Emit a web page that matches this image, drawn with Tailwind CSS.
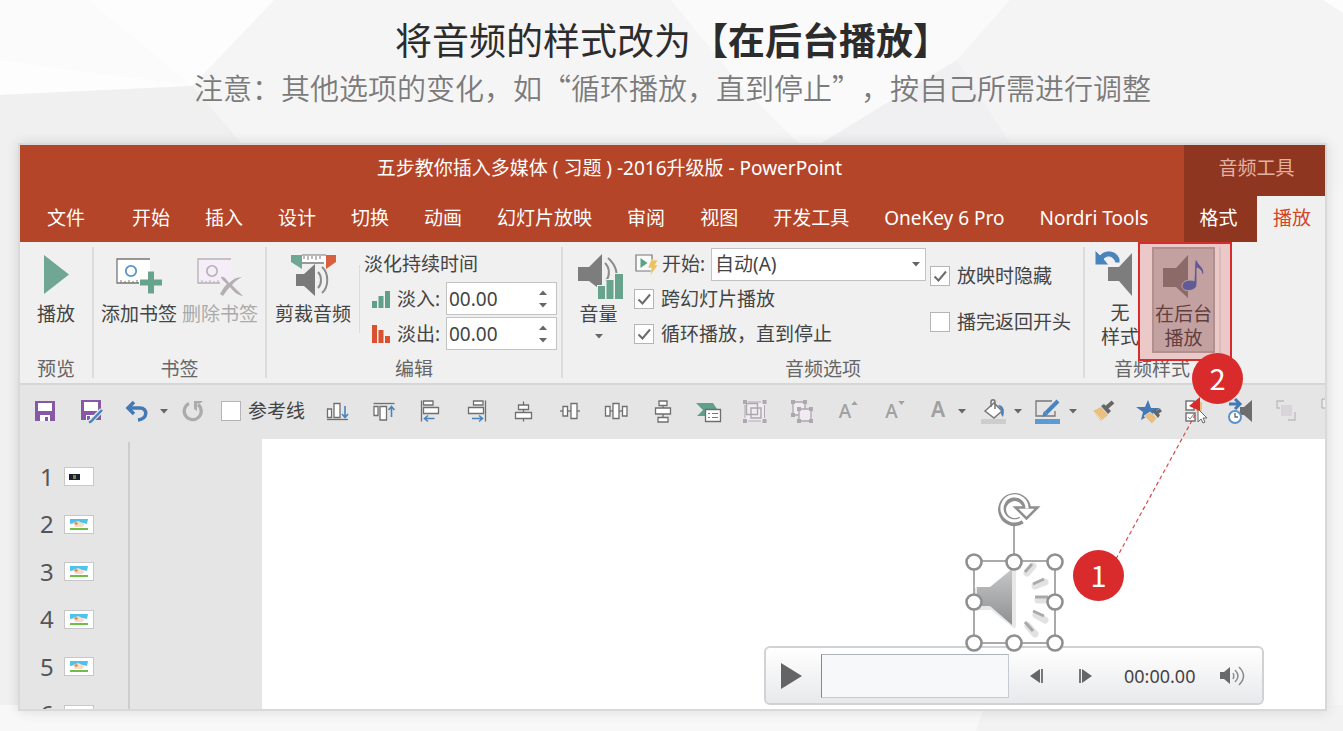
<!DOCTYPE html>
<html lang="zh-CN">
<head>
<meta charset="utf-8">
<meta name="viewport" content="width=device-width, initial-scale=1">
<title>将音频的样式改为【在后台播放】</title>
<script src="https://cdn.jsdelivr.net/npm/@tailwindcss/browser@4"></script>
</head>
<body class="bg-[#f5f5f6] font-['Noto_Sans','Noto_Sans_CJK_SC',sans-serif] text-[19px] leading-6 text-[#444]">
<!-- shared symbols -->
<svg class="hidden" aria-hidden="true">
  <symbol id="caret" viewBox="0 0 8 5"><path d="M0 0h8L4 4.5z" fill="#666"/></symbol>
  <symbol id="tick" viewBox="0 0 20 20"><path d="M4.500 10.500l4 4L16 5.500" fill="none" stroke="#6c6c6c" stroke-width="2"/></symbol>
  <symbol id="scene" viewBox="0 0 18 11"><path d="M0 0h18l-1 5-4-1-4 1-4-1-5 1z" fill="#4cc3ee"/><path d="M3 4l5-2 7 3-3 3-7 0z" fill="#f6dcc4"/><path d="M4 4l3-1 1 2-2 1z" fill="#d98a5b"/><path d="M0 9h18v2H0z" fill="#6cc04a"/></symbol>
</svg>

<div class="relative isolate flex h-screen min-h-[600px] flex-col overflow-hidden pr-4 pb-5 pl-[18px]">
  <svg class="absolute inset-0 -z-10 h-full w-full" viewBox="0 0 1343 731" preserveAspectRatio="none" aria-hidden="true">
    <rect width="1343" height="731" fill="#f5f5f6"/>
    <path d="M0 0H274L192 86 0 95z" fill="#fdfdfd"/>
    <path d="M0 0H88L192 86 0 60z" fill="#fbfbfb"/>
    <path d="M0 95L192 86 278 185V731H0z" fill="#f0f0f1"/>
    <path d="M671 0H1010L957 60 807 152 740 85z" fill="#fafafb"/>
    <path d="M957 60L807 152V185H1037z" fill="#f0f0f2"/>
    <path d="M1010 0L957 60 1037 185H1343V0z" fill="#f4f4f5"/>
    <path d="M1323 0L1343 13V0z" fill="#fdfdfd"/>
    <path d="M0 705H985L976 731H0z" fill="#f8f8f9"/>
    <path d="M985 705H1343V731H976z" fill="#f2f2f3"/>
  </svg>

  <header class="pt-[14px] text-center font-['Noto_Sans_CJK_SC',sans-serif] [text-spacing-trim:space-all]">
    <h1 class="text-[37px] leading-[50px] whitespace-nowrap text-[#2c2c2c]">将音频的样式改为<strong class="font-bold">【在后台播放】</strong></h1>
    <p class="text-[29px] leading-[46px] font-[350] whitespace-nowrap text-[#7b7b7b]">注意：其他选项的变化，如“循环播放，直到停止”，按自己所需进行调整</p>
  </header>

  <main class="relative mt-[33px] flex min-h-0 flex-1 flex-col border-2 border-[#d9d9d9] bg-[#e5e5e5] shadow-[0_0_12px_rgba(0,0,0,0.12)]">
    <!-- title bar and tabs -->
    <div class="flex h-[97px] flex-none bg-[#b54529] text-white">
      <div class="flex min-w-0 flex-1 flex-col overflow-hidden">
        <div class="flex h-[50px] items-center justify-center pb-1 pl-[15px] whitespace-nowrap"><span>五步教你插入多媒体 ( 习题 ) -2016升级版 - PowerPoint</span></div>
        <nav class="flex h-[47px] items-center gap-[35px] pb-[2px] pl-[27px] whitespace-nowrap">
          <button class="mr-[12px]">文件</button>
          <button>开始</button><button>插入</button><button>设计</button><button>切换</button><button>动画</button><button>幻灯片放映</button><button>审阅</button><button>视图</button><button>开发工具</button><button>OneKey 6 Pro</button><button>Nordri Tools</button>
        </nav>
      </div>
      <div class="flex w-[141px] flex-none flex-col bg-[#8f3620]">
        <div class="flex h-[51px] items-center justify-center pb-[5px] pl-1 text-[#e3b1a2]"><span>音频工具</span></div>
        <div class="flex flex-1">
          <button class="w-[73px] pr-1 pb-[2px]">格式</button>
          <button class="flex-1 bg-[#f0f0f0] pb-[2px] pl-[2px] text-[#d24726]">播放</button>
        </div>
      </div>
    </div>

    <!-- ribbon -->
    <div class="flex h-[143px] flex-none border-b-2 border-[#d6d6d6] bg-[#f0f0f0] py-[5px] whitespace-nowrap">
      <section class="flex w-[74px] flex-none flex-col items-center justify-between border-r-2 border-[#dcdcdc]">
        <button class="flex flex-col items-center">
          <svg class="h-[55px] w-10" viewBox="0 0 40 55"><path d="M8 8L33 27.500 8 47z" fill="#70a794"/></svg>
          <span>播放</span>
        </button>
        <h2 class="leading-[18px] text-[#666]">预览</h2>
      </section>

      <section class="flex w-[173px] flex-none flex-col items-center justify-between border-r-2 border-[#dcdcdc]">
        <div class="flex gap-[5px]">
          <button class="flex flex-col items-center">
            <svg class="h-[55px] w-[52px]" viewBox="0 0 52 55"><path d="M4 12h33v24H4z" fill="#fff"/><path d="M37 12H4v24h22" fill="none" stroke="#777" stroke-width="1.300"/><path d="M8 33v3M12 34v2M16 33v3M20 34v2M24 33v3" stroke="#777"/><circle cx="18" cy="24" r="5.200" fill="none" stroke="#5b93c9" stroke-width="1.800"/><path d="M35 24.500h6v8h8v6h-8v8h-6v-8h-8v-6h8z" fill="#68a38e"/></svg>
            <span>添加书签</span>
          </button>
          <button class="flex flex-col items-center text-[#aaa]" disabled>
            <svg class="h-[55px] w-[52px]" viewBox="0 0 52 55"><path d="M4 12h33v24H4z" fill="#f5eef8"/><path d="M37 12H4v24h22" fill="none" stroke="#b5b0b5" stroke-width="1.300"/><path d="M8 33v3M12 34v2M16 33v3M20 34v2M24 33v3" stroke="#b5b0b5"/><circle cx="18" cy="24" r="5.200" fill="none" stroke="#b3b0b3" stroke-width="1.600"/><path d="M27 30c3-1 5 2 8 6 4-4 8-6 13-6-5 3-8 5-10 8 3 3 7 7 11 11-6-1-10-5-13-9-3 3-5 6-7 9l-3-2c2-4 4-7 7-10-3-3-6-5-6-7z" fill="#b3afb3"/></svg>
            <span>删除书签</span>
          </button>
        </div>
        <h2 class="leading-[18px] text-[#666]">书签</h2>
      </section>

      <section class="flex w-[296px] flex-none flex-col justify-between border-r-2 border-[#dcdcdc]">
        <div class="flex">
          <button class="flex w-[92px] flex-col items-center self-start">
            <svg class="h-[55px] w-[50px]" viewBox="0 0 50 55"><path d="M14 8h24v9H14z" fill="#fff"/><path d="M16 9v3M20 9v4M24 9v3M28 9v4M32 9v3" stroke="#777"/><path d="M14 8h24" stroke="#777"/><path d="M14 16h22" stroke="#777" stroke-width="1.500"/><path d="M3 8h11v14L3 15z" fill="#70a794"/><path d="M48 8H38v14l10-7z" fill="#d9603f"/><path d="M8 27h8l11-10v32L16 39H8z" fill="#7a7a7a"/><path d="M30 25c4 4 4 12 0 16M34 20c7 6 7 20 0 26" fill="none" stroke="#8b8b8b" stroke-width="2"/></svg>
            <span>剪裁音频</span>
          </button>
          <div class="mt-[18px] h-[68px] w-px bg-[#dcdcdc]"></div>
          <div class="flex flex-1 flex-col pl-1">
            <div class="flex h-[34px] items-center">淡化持续时间</div>
            <div class="flex h-[35px] items-center">
              <svg class="ml-2 h-[18px] w-[18px]" viewBox="0 0 18 18"><path d="M0 11h5v7H0zM6.500 6h5v12h-5zM13 1h5v17h-5z" fill="#5fa188"/></svg>
              <label for="fin" class="ml-[7px] w-12">淡入:</label>
              <span class="ml-px flex h-[33px] w-[111px] border border-[#c3c3c3] bg-white"><input id="fin" class="w-20 bg-transparent pl-[2px] outline-none" value="00.00"><span class="flex flex-1 flex-col justify-center gap-2 pl-3"><button aria-label="增加淡入"><svg class="h-[5px] w-2 rotate-180"><use href="#caret"/></svg></button><button aria-label="减少淡入"><svg class="h-[5px] w-2"><use href="#caret"/></svg></button></span></span>
            </div>
            <div class="flex h-[35px] items-center">
              <svg class="ml-2 h-[18px] w-[18px]" viewBox="0 0 18 18"><path d="M0 0h5v18H0zM6.500 5h5v13h-5zM13 11h5v7h-5z" fill="#d9512f"/></svg>
              <label for="fout" class="ml-[7px] w-12">淡出:</label>
              <span class="ml-px flex h-[33px] w-[111px] border border-[#c3c3c3] bg-white"><input id="fout" class="w-20 bg-transparent pl-[2px] outline-none" value="00.00"><span class="flex flex-1 flex-col justify-center gap-2 pl-3"><button aria-label="增加淡出"><svg class="h-[5px] w-2 rotate-180"><use href="#caret"/></svg></button><button aria-label="减少淡出"><svg class="h-[5px] w-2"><use href="#caret"/></svg></button></span></span>
            </div>
          </div>
        </div>
        <h2 class="text-center leading-[18px] text-[#666]">编辑</h2>
      </section>

      <section class="flex w-[522px] flex-none flex-col justify-between border-r-2 border-[#dcdcdc]">
        <div class="flex">
          <button class="flex w-[71px] flex-col items-center self-start">
            <svg class="h-[55px] w-[50px]" viewBox="0 0 50 55"><path d="M4 20h11L28 7v37L15 34H4z" fill="#7d7d7d"/><path d="M31 16c5 5 5 13 1 18M34 11c8 7 10 15 8 24" fill="none" stroke="#8b8b8b" stroke-width="2"/><path d="M23 38h9v15h-9zM31.500 32h9v21h-9zM40 26h10v27H40z" fill="#f0f0f0"/><path d="M24 39h7v13h-7zM32.500 33h7v19h-7zM41 27h8v25h-8z" fill="#68a38e"/></svg>
            <span>音量</span>
            <svg class="mt-2 h-[5px] w-2"><use href="#caret"/></svg>
          </button>
          <div class="mr-1 flex w-[292px] flex-col">
            <div class="flex h-[34px] items-center">
              <svg class="h-6 w-6" viewBox="0 0 24 24"><path d="M2 3h16v16H2z" fill="#fafafa" stroke="#777" stroke-width="1.200"/><path d="M6.500 6l7 5-7 5z" fill="#5fa188"/><path d="M17 8h7l-3 5h3l-8 11 2-8h-4z" fill="#eec15f" stroke="#f0f0f0" stroke-width=".6"/></svg>
              <label for="start" class="ml-1 w-[49px]">开始:</label>
              <span class="relative flex h-[33px] flex-1">
                <select id="start" class="w-full appearance-none border border-[#c3c3c3] bg-white pl-[3px] outline-none"><option>自动(A)</option></select>
                <svg class="pointer-events-none absolute top-[14px] right-[6px] h-[5px] w-2"><use href="#caret"/></svg>
              </span>
            </div>
            <label class="flex h-[35px] items-center gap-[7px]"><span class="grid"><input type="checkbox" checked class="peer col-start-1 row-start-1 size-5 appearance-none border border-[#b5b5b5] bg-white"><svg class="invisible col-start-1 row-start-1 size-5 peer-checked:visible"><use href="#tick"/></svg></span>跨幻灯片播放</label>
            <label class="flex h-[35px] items-center gap-[7px]"><span class="grid"><input type="checkbox" checked class="peer col-start-1 row-start-1 size-5 appearance-none border border-[#b5b5b5] bg-white"><svg class="invisible col-start-1 row-start-1 size-5 peer-checked:visible"><use href="#tick"/></svg></span>循环播放，直到停止</label>
          </div>
          <div class="flex flex-col pt-[6px]">
            <label class="flex h-[46px] items-center gap-[7px]"><span class="grid"><input type="checkbox" checked class="peer col-start-1 row-start-1 size-5 appearance-none border border-[#b5b5b5] bg-white"><svg class="invisible col-start-1 row-start-1 size-5 peer-checked:visible"><use href="#tick"/></svg></span>放映时隐藏</label>
            <label class="flex h-[46px] items-center gap-[7px]"><span class="grid"><input type="checkbox" class="peer col-start-1 row-start-1 size-5 appearance-none border border-[#b5b5b5] bg-white"><svg class="invisible col-start-1 row-start-1 size-5 peer-checked:visible"><use href="#tick"/></svg></span>播完返回开头</label>
          </div>
        </div>
        <h2 class="text-center leading-[18px] text-[#666]">音频选项</h2>
      </section>

      <section class="flex w-[136px] flex-none flex-col justify-between border-r-2 border-[#dcdcdc]">
        <div class="flex">
          <button class="flex w-[67px] flex-none flex-col items-center pl-[3px]">
            <svg class="h-[54px] w-[50px]" viewBox="0 0 50 54"><path d="M13 20h11L37 6v43L24 34H13z" fill="#7d7d7d"/><path d="M0 3l5 5c5-6 16-6 20 4v4h-5c-1-6-7-8-11-4l5 6H0z" fill="#4a84bd" stroke="#f0f0f0" stroke-width="1"/></svg>
            <span>无</span><span>样式</span>
          </button>
          <button class="flex h-[106px] w-[63px] flex-col items-center border-2 border-[#a8a8a8] bg-[#bfbfbf]">
            <svg class="h-[53px] w-[56px] flex-none" viewBox="0 0 56 53"><path d="M7 19h13L32 6v43L20 38H7z" fill="#7a7a7a"/><path d="M39 11h2c1 5 7 7 7 13l-2 2c0-4-2-6-5-7v16c0 8-15 9-15 2 0-6 9-7 12-5z" fill="#4467b0" stroke="#bfbfbf" stroke-width="1"/></svg>
            <span>在后台</span><span>播放</span>
          </button>
        </div>
        <h2 class="text-center leading-[18px] text-[#666]">音频样式</h2>
      </section>
    </div>

    <!-- quick access toolbar -->
    <div class="flex h-[54px] flex-none items-center overflow-hidden pb-[2px] whitespace-nowrap" role="toolbar">
      <button class="flex w-12 flex-none justify-center pl-[2px]" aria-label="保存"><svg class="size-7" viewBox="0 0 28 28"><path d="M4 4h20v20H4z" fill="#8757a8"/><path d="M7 6h14v8H7zM9 18h10v6h-2v-4h-3v4H9z" fill="#fff"/></svg></button>
      <button class="flex w-[46px] flex-none justify-center" aria-label="另存为"><svg class="size-7" viewBox="0 0 28 28"><path d="M4 3h20v20H4z" fill="#8757a8"/><path d="M7 5h14v9H7zM9 18h9v5H9z" fill="#fff"/><path d="M10 19h3v4h-3z" fill="#8757a8"/><path d="M25 13L13 25" stroke="#e5e5e5" stroke-width="5"/><path d="M25 13L14 24.500l-2 1" stroke="#4a84bd" stroke-width="2.500" fill="none"/></svg></button>
      <button class="flex w-[46px] flex-none justify-center" aria-label="撤消"><svg class="size-7" viewBox="0 0 28 28"><path d="M6 11h11c8 0 8 11-2 12" fill="none" stroke="#4479b5" stroke-width="3.500"/><path d="M11 5L5 11l6 6" fill="none" stroke="#4479b5" stroke-width="3.500"/></svg></button>
      <svg class="h-[5px] w-2 flex-none"><use href="#caret"/></svg>
      <button class="ml-2 flex w-[34px] flex-none justify-center" aria-label="重复"><svg class="size-7" viewBox="0 0 28 28"><path d="M10 6.500a8.500 8.500 0 1 0 9 1" fill="none" stroke="#ababab" stroke-width="3.200"/><path d="M15 4h9l-3 2.500h-3V14l-3-2z" fill="#ababab"/></svg></button>
      <label class="ml-[11px] flex flex-none items-center gap-[7px]"><input type="checkbox" class="size-5 appearance-none border border-[#b5b5b5] bg-white">参考线</label>
      <div class="ml-[9px] flex w-[604px] flex-none text-[#6f6f6f]">
        <button class="flex flex-1 justify-center" aria-label="底端对齐"><svg class="size-7" viewBox="0 0 28 28" fill="none" stroke="currentColor" stroke-width="1.300"><path d="M4.500 12h4v8.500h-4zM11 6.500h6v14h-6z" fill="#fff"/><path d="M4 22.500h21"/><path d="M22 9v11M19 17l3 3.500 3-3.500" stroke="#4a84bd" stroke-width="1.600"/></svg></button>
        <button class="flex flex-1 justify-center" aria-label="顶端对齐"><svg class="size-7" viewBox="0 0 28 28" fill="none" stroke="currentColor" stroke-width="1.300"><path d="M4 9.500h4v9H4zM10 9.500h6.500V23H10z" fill="#fff"/><path d="M3.500 6.500h21"/><path d="M21.500 20V9.500M18.500 13l3-3.500 3 3.500" stroke="#4a84bd" stroke-width="1.600"/></svg></button>
        <button class="flex flex-1 justify-center" aria-label="左对齐"><svg class="size-7" viewBox="0 0 28 28" fill="none" stroke="currentColor" stroke-width="1.300"><path d="M7.500 4h9.500v4H7.500zM7.500 10.500h15v6h-15z" fill="#fff"/><path d="M5.500 3.500v21"/><path d="M18.500 21.500h-10M12 18.500l-3.500 3 3.500 3" stroke="#4a84bd" stroke-width="1.600"/></svg></button>
        <button class="flex flex-1 justify-center" aria-label="右对齐"><svg class="size-7" viewBox="0 0 28 28" fill="none" stroke="currentColor" stroke-width="1.300"><path d="M10.500 4H20v4h-9.500zM5.500 10.500h15v6h-15z" fill="#fff"/><path d="M22.500 3.500v21"/><path d="M9 21.500h10M16 18.500l3.500 3-3.500 3" stroke="#4a84bd" stroke-width="1.600"/></svg></button>
        <button class="flex flex-1 justify-center" aria-label="水平居中"><svg class="size-7" viewBox="0 0 28 28" fill="none" stroke="currentColor" stroke-width="1.300"><path d="M14.500 4.500v20"/><path d="M9.500 8h10v4.500h-10zM6.500 15.500h16v6h-16z" fill="#fff"/></svg></button>
        <button class="flex flex-1 justify-center" aria-label="垂直居中"><svg class="size-7" viewBox="0 0 28 28" fill="none" stroke="currentColor" stroke-width="1.300"><path d="M4 14h20"/><path d="M7 9.500h4.500V19H7zM15 6.500h6v15h-6z" fill="#fff"/></svg></button>
        <button class="flex flex-1 justify-center" aria-label="横向分布"><svg class="size-7" viewBox="0 0 28 28" fill="none" stroke="currentColor" stroke-width="1.300"><path d="M8 14h14"/><path d="M3.500 9.500H8V19H3.500zM11 6.500h6v15h-6zM20.500 9.500H25V19h-4.500z" fill="#fff"/></svg></button>
        <button class="flex flex-1 justify-center" aria-label="纵向分布"><svg class="size-7" viewBox="0 0 28 28" fill="none" stroke="currentColor" stroke-width="1.300"><path d="M14 8v13"/><path d="M10 4h8v4.500h-8zM6.500 11h15v6h-15zM9 20.500h10V25H9z" fill="#fff"/></svg></button>
        <button class="flex flex-1 justify-center" aria-label="选择窗格"><svg class="size-7" viewBox="0 0 28 28"><path d="M1 6h17l4 6H11v7H2l6-6z" fill="#5fa188"/><path d="M10.500 12.500h15v12h-15z" fill="#fff" stroke="#6f6f6f" stroke-width="1.300"/><path d="M13 16.500h2M17 16.500h6M13 20.500h2M17 20.500h6" stroke="#777" stroke-width="1.200"/></svg></button>
        <button class="flex flex-1 justify-center text-[#aca8ac]" aria-label="组合"><svg class="size-7" viewBox="0 0 28 28"><path d="M4 5h20v20H4z" fill="#f0eaf2"/><path d="M7 5h13M7 24h13M4 8v13M23.500 8v13" stroke="currentColor"/><path d="M5.500 6.500h11v11h-11zM10 11h10v10H10z" fill="none" stroke="currentColor" stroke-width="1.400"/><path d="M2 3h4v4H2zM21.500 3h4v4h-4zM2 22h4v4H2zM21.500 22h4v4h-4z" fill="currentColor"/></svg></button>
        <button class="flex flex-1 justify-center text-[#aca8ac]" aria-label="取消组合"><svg class="size-7" viewBox="0 0 28 28"><path d="M5 5h12v13H5z" fill="#f0eaf2" stroke="currentColor" stroke-width="1.300"/><path d="M11 12h12v12H11z" fill="#f0eaf2" stroke="currentColor" stroke-width="1.300"/><path d="M3 3h4v4H3zM15 3h4v4h-4zM3 16h4v4H3zM9 10h4v4H9zM21 10h4v4h-4zM9 22h4v4H9zM21 22h4v4h-4z" fill="currentColor"/></svg></button>
        <button class="flex flex-1 items-center justify-center font-medium text-[#a0a0a0]" aria-label="增大字号"><span>A</span><svg class="mb-4 h-1 w-[7px] rotate-180" viewBox="0 0 8 5"><path d="M0 0h8L4 5z" fill="#a0a0a0"/></svg></button>
        <button class="flex flex-1 items-center justify-center font-medium text-[#a0a0a0]" aria-label="减小字号"><span>A</span><svg class="mb-4 h-1 w-[7px]" viewBox="0 0 8 5"><path d="M0 0h8L4 5z" fill="#a0a0a0"/></svg></button>
      </div>
      <button class="flex w-10 flex-none justify-center pb-1 text-[21px] font-semibold text-[#a0a0a0]" aria-label="字体颜色">A</button>
      <svg class="h-[5px] w-2 flex-none"><use href="#caret"/></svg>
      <button class="ml-[14px] flex w-7 flex-none" aria-label="形状填充"><svg class="size-7" viewBox="0 0 28 28"><path d="M1 22h25v5H1z" fill="#cecdce"/><path d="M5 14l9-8 8 8-8 7z" fill="#fff" stroke="#777" stroke-width="1.500"/><path d="M11 10V5c0-3 4-3 4 0v7" fill="none" stroke="#777" stroke-width="1.500"/><path d="M18 8c6 0 7 6 5 12-2-2-3-4-1-6z" fill="#4a84bd"/></svg></button>
      <svg class="ml-[6px] h-[5px] w-2 flex-none"><use href="#caret"/></svg>
      <button class="ml-3 flex w-7 flex-none" aria-label="形状轮廓"><svg class="size-7" viewBox="0 0 28 28"><path d="M1 22h25v5H1z" fill="#5b9bd5"/><path d="M18 4H2v15h19v-5" fill="none" stroke="#777" stroke-width="1.300"/><path d="M24 4L12 16" stroke="#4a84bd" stroke-width="4"/><path d="M10 14l4 4-6 2z" fill="#4a84bd"/></svg></button>
      <svg class="ml-[7px] h-[5px] w-2 flex-none"><use href="#caret"/></svg>
      <div class="ml-[3px] flex flex-none">
        <button class="flex w-[46px] justify-center" aria-label="格式刷"><svg class="size-7" viewBox="0 0 28 28"><path d="M4 14l8-4 7 8-7 6z" fill="#eabf80"/><path d="M4 14l9 9" stroke="#f6ddb0"/><path d="M12 9l3-2 7 7-3 3z" fill="#666"/><path d="M17 11l7-6" stroke="#666" stroke-width="4"/></svg></button>
        <button class="flex w-[46px] justify-center" aria-label="动画刷"><svg class="size-7" viewBox="0 0 28 28"><path d="M13 3l3 8h9l-7 5 2 7-7-4-7 4 2-8-7-5h9z" fill="#4479b5"/><path d="M9 19l6-4 7 6-5 6z" fill="#eabf80" stroke="#e5e5e5" stroke-width=".8"/><path d="M17 14l6 7 2-3-5-6z" fill="#666"/><path d="M21 16l5-3" stroke="#666" stroke-width="3.500"/></svg></button>
        <button class="flex w-[46px] justify-center" aria-label="选择"><svg class="size-7" viewBox="0 0 28 28"><path d="M5 4h8v9H5zM5 16h9v8H5z" fill="#fff" stroke="#777" stroke-width="1.500"/><path d="M15 5h6v9h-6z" fill="#eabf80"/><path d="M7 20l2 2 4-5" fill="none" stroke="#777"/><path d="M17 12v13l3-3 2 4 2-1-2-4h4z" fill="#fff" stroke="#666"/></svg></button>
        <button class="flex w-[46px] justify-center" aria-label="触发"><svg class="size-7" viewBox="0 0 28 28"><path d="M13 10h4l8-7v22l-8-7h-4z" fill="#6d6d6d"/><path d="M2 7h10M8 2l5 5-5 5" fill="none" stroke="#4479b5" stroke-width="3"/><circle cx="8" cy="20" r="6" fill="#fff" stroke="#5b93c9" stroke-width="2"/><path d="M8 16v4h3" fill="none" stroke="#666" stroke-width="1.300"/></svg></button>
        <button class="flex w-[46px] justify-center" aria-label="上移一层"><svg class="size-7" viewBox="0 0 28 28"><path d="M11 4H4v7h3M15 23h7v-8" fill="none" stroke="#bcbcbc" stroke-width="1.300"/><path d="M8 8h11v11H8z" fill="#d9d4da"/></svg></button>
        <button class="flex w-[46px] justify-center" aria-label="下移一层"><svg class="size-7" viewBox="0 0 28 28"><path d="M3 2h9v9H3z" fill="#eee" stroke="#aaa"/></svg></button>
      </div>
    </div>

    <!-- slide list and canvas -->
    <div class="flex min-h-0 flex-1 overflow-hidden">
      <ol class="mt-[14px] grid h-[285px] w-[108px] flex-none grid-rows-6 text-2xl text-[#555]">
        <li class="flex items-center pl-5"><span class="w-6">1</span><span class="flex h-[19px] w-[30px] items-center border border-[#c8c8c8] bg-white pl-1"><svg class="h-[6px] w-[11px]" viewBox="0 0 11 6"><path d="M0 0h11v6H0z" fill="#17222d"/><path d="M4 1h3v4H4z" fill="#8b7a55"/></svg></span></li>
        <li class="flex items-center pl-5"><span class="w-6">2</span><span class="flex h-[19px] w-[30px] items-center justify-center border border-[#c8c8c8] bg-white"><svg class="h-[11px] w-[18px]"><use href="#scene"/></svg></span></li>
        <li class="flex items-center pl-5"><span class="w-6">3</span><span class="flex h-[19px] w-[30px] items-center justify-center border border-[#c8c8c8] bg-white"><svg class="h-[11px] w-[18px]"><use href="#scene"/></svg></span></li>
        <li class="flex items-center pl-5"><span class="w-6">4</span><span class="flex h-[19px] w-[30px] items-center justify-center border border-[#c8c8c8] bg-white"><svg class="h-[11px] w-[18px]"><use href="#scene"/></svg></span></li>
        <li class="flex items-center pl-5"><span class="w-6">5</span><span class="flex h-[19px] w-[30px] items-center justify-center border border-[#c8c8c8] bg-white"><svg class="h-[11px] w-[18px]"><use href="#scene"/></svg></span></li>
        <li class="flex items-center pl-5"><span class="w-6">6</span><span class="h-[19px] w-[30px] border border-[#c8c8c8] bg-white"></span></li>
      </ol>
      <div class="mt-[3px] w-[134px] flex-none border-l-2 border-[#cdcdcd]"></div>
      <div class="relative min-w-0 flex-1 overflow-hidden bg-white">
        <div class="absolute top-[207px] left-[502px] flex h-[59px] w-[500px] items-center rounded-md border-2 border-[#d0d2d5] bg-linear-to-b from-white to-[#e8e9eb]">
          <button class="ml-[14px]" aria-label="播放"><svg class="h-[26px] w-[22px]" viewBox="0 0 22 26"><path d="M1 0l21 13L1 26z" fill="#646466"/></svg></button>
          <div class="ml-[19px] h-[44px] w-[188px] border border-t-[#aeb4b9] border-r-[#c5cbd0] border-b-[#c5cbd0] border-l-[#85898d] bg-[#f7f8fa]"></div>
          <button class="ml-5" aria-label="后退"><svg class="h-4 w-4" viewBox="0 0 16 16"><path d="M11 1v14L1 8z" fill="#666"/><path d="M13 1v14" stroke="#777" stroke-width="2"/></svg></button>
          <button class="ml-[32px]" aria-label="前进"><svg class="h-4 w-4" viewBox="0 0 16 16"><path d="M5 1v14l10-7z" fill="#666"/><path d="M3 1v14" stroke="#777" stroke-width="2"/></svg></button>
          <span class="ml-[31px] w-[76px] text-lg">00:00.00</span>
          <button class="ml-[19px]" aria-label="静音"><svg class="h-6 w-7" viewBox="0 0 28 24"><path d="M1 8h4l6-5v17l-6-5H1z" fill="#696969"/><path d="M14 9c1 2 1 4 0 6M16 6c4 4 4 8 0 12M20 3c6 6 6 12 0 18" fill="none" stroke="#8c8c8c" stroke-width="1.500"/></svg></button>
        </div>
        <svg class="absolute top-[46px] left-[695px] h-[176px] w-[115px]" viewBox="0 0 115 176" role="img" aria-label="音频对象">
          <defs><linearGradient id="cone" x1="0" y1="0" x2="0" y2="1"><stop offset="0" stop-color="#c6c7c9"/><stop offset="1" stop-color="#8f9092"/></linearGradient></defs>
          <path d="M20 104h15L57 85v56L35 123H20z" fill="#ddd" stroke="#e8e8e8" stroke-width="4" stroke-linejoin="round"/>
          <path d="M20 102h13L55 84v56L33 121H20z" fill="url(#cone)"/>
          <g stroke="#e2e2e2" stroke-width="7" stroke-linecap="round"><path d="M70 88l6-7M78 101l10-4M81 115h12M79 130l9 5M71 141l7 8"/></g>
          <g stroke="#a9a9ab" stroke-width="3"><path d="M68 87l7-8M76 99l11-5M78 112h13M76 126l11 5M68 137l8 9"/></g>
          <g stroke="#aaa" stroke-width="2" fill="none"><path d="M57 41V76M17 76h81v82H17z"/></g>
          <g fill="#fff" stroke="#8f8f8f" stroke-width="2.600"><circle cx="17" cy="77" r="7.500"/><circle cx="57" cy="77" r="7.500"/><circle cx="98" cy="77" r="7.500"/><circle cx="17" cy="117" r="7.500"/><circle cx="98" cy="117" r="7.500"/><circle cx="17" cy="158" r="7.500"/><circle cx="57" cy="158" r="7.500"/><circle cx="98" cy="158" r="7.500"/></g>
          <path d="M64.500 35A12.500 12.500 0 1 1 70 23" fill="none" stroke="#8f8f8f" stroke-width="8"/><path d="M58.500 22.500h22L69.500 33.500z" fill="#fff" stroke="#8f8f8f" stroke-width="2.500"/><path d="M64 34A12.500 12.500 0 1 1 70 23.500" fill="none" stroke="#fff" stroke-width="3.200"/>
        </svg>
      </div>
    </div>

    <!-- step callouts -->
    <div class="absolute top-[97px] left-[1118px] h-[119px] w-[94px] border-2 border-[#d92b2b] bg-[#d92b2b]/20"></div>
    <svg class="pointer-events-none absolute top-[250px] left-[1090px] h-[170px] w-[100px]" viewBox="0 0 100 170"><path d="M6 164L85 20" stroke="#d94a4a" stroke-width="1.200" stroke-dasharray="4 3"/><path d="M90 2v14l-11-5z" fill="#d92b2b"/></svg>
    <div class="absolute top-[405px] left-[1053px] flex size-[51px] items-center justify-center rounded-full bg-[#d92b2b] pb-1 font-['Noto_Sans_CJK_SC',sans-serif] text-[29px] text-white"><span>1</span></div>
    <div class="absolute top-[208px] left-[1172px] flex size-[51px] items-center justify-center rounded-full bg-[#d92b2b] pb-1 font-['Noto_Sans_CJK_SC',sans-serif] text-[29px] text-white"><span>2</span></div>
  </main>
</div>
</body>
</html>
